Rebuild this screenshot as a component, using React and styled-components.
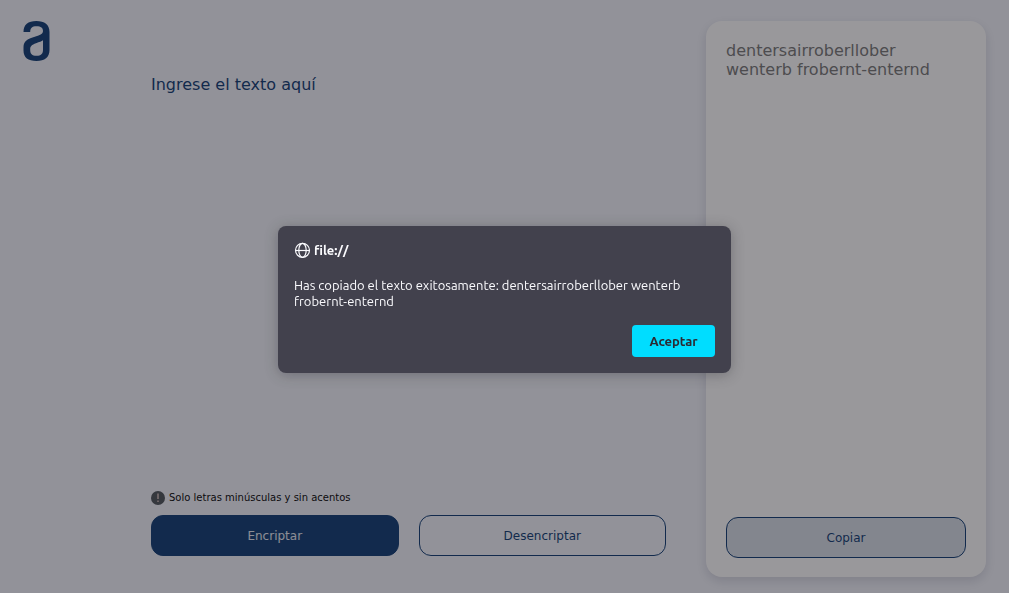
import React from "react";
import styled, { createGlobalStyle } from "styled-components";

const navy = "#0a3871";
const pageFont = '"DejaVu Sans", Verdana, sans-serif';
const dialogFont = 'Ubuntu, "Noto Sans", sans-serif';

const GlobalStyle = createGlobalStyle`
  *, *::before, *::after { box-sizing: border-box; }
  body { margin: 0; background: #f3f5fc; font-family: ${pageFont}; }
`;

const Page = styled.div`
  display: flex;
  min-height: 100vh;
  padding: 21px 23px 16px;
`;

const Header = styled.header`
  flex: 0 0 128px;
`;

const Logo = styled.svg`
  display: block;
  width: 27px;
  height: 40px;
`;

const Editor = styled.main`
  flex: 1;
  min-width: 0;
  display: flex;
  flex-direction: column;
  padding: 54px 0 21px;
`;

const Input = styled.textarea`
  flex: 1;
  width: 100%;
  padding: 0;
  border: 0;
  outline: 0;
  resize: none;
  background: transparent;
  color: ${navy};
  font: 16px/19px ${pageFont};

  &::placeholder { color: ${navy}; opacity: 1; }
`;

const Hint = styled.p`
  display: flex;
  align-items: center;
  gap: 4px;
  margin: 0 0 10px;
  color: #000;
  font-size: 10px;
  line-height: 14px;
`;

const HintIcon = styled.svg`
  width: 14px;
  height: 14px;
`;

const Actions = styled.div`
  display: grid;
  grid-template-columns: 1fr 1fr;
  gap: 20px;
`;

const tones = {
  filled: `background: ${navy}; color: #e8ecf4;`,
  outline: `background: transparent; color: ${navy};`,
  soft: `background: #d8dfe8; color: ${navy};`,
};

const Button = styled.button`
  height: 41px;
  padding: 0 16px;
  border: 1px solid ${navy};
  border-radius: 12px;
  font: 12px ${pageFont};
  ${({ $tone }) => tones[$tone]}
`;

const Result = styled.aside`
  flex: 0 0 280px;
  display: flex;
  flex-direction: column;
  justify-content: space-between;
  margin-left: 40px;
  padding: 20px 20px 19px;
  border-radius: 16px;
  background: #fff;
  box-shadow: 0 4px 12px rgba(0, 0, 40, 0.14);
`;

const ResultText = styled.p`
  margin: 0;
  color: #757575;
  font-size: 16px;
  line-height: 19px;
`;

const Overlay = styled.div`
  position: fixed;
  inset: 0;
  display: flex;
  align-items: center;
  justify-content: center;
  padding: 6px 16px 0 16px;
  background: rgba(28, 27, 34, 0.45);
`;

const Dialog = styled.section`
  width: 453px;
  max-width: 100%;
  padding: 16px;
  border-radius: 8px;
  background: #42414d;
  color: #fbfbfe;
  box-shadow: 0 2px 14px rgba(28, 27, 34, 0.3);
  font: 13px/16px ${dialogFont};
`;

const Origin = styled.h2`
  display: flex;
  align-items: center;
  gap: 3px;
  margin: 0 0 19px;
  font-size: 13px;
  font-weight: 700;
  line-height: 16px;
`;

const Globe = styled.svg`
  width: 17px;
  height: 16px;
`;

const Message = styled.p`
  margin: 0;
`;

const DialogActions = styled.div`
  display: flex;
  justify-content: flex-end;
  margin-top: 16px;
`;

const AcceptButton = styled.button`
  width: 83px;
  height: 32px;
  padding: 0;
  border: 0;
  border-radius: 4px;
  background: #00ddff;
  color: #2b2a33;
  font: 700 13px ${dialogFont};
`;

export default function App() {
  return (
    <>
      <GlobalStyle />
      <Page>
        <Header>
          <Logo viewBox="0 0 27 40" role="img" aria-label="Logo">
            <path
              fill={navy}
              fillRule="evenodd"
              d="M0.500 11C0.500 3.800 5 0 13.300 0C21.700 0 26.500 3.800 26.500 11V29C26.500 36.200 21.700 40 13.500 40C5 40 0.500 36.500 0.500 29.500V26.500C0.500 21.200 3 19 8 17L15.500 14.400C19 13.200 20 12 20 10C20 6.800 18 5.200 13.500 5.200C9 5.200 7.200 7 7.200 11ZM20 19.300C18.500 20.500 16.500 21 13 22.200C8.700 23.800 7.200 25.200 7.200 28V29C7.200 32.900 9 34.800 13.500 34.800C18 34.800 20 32.900 20 29Z"
            />
          </Logo>
        </Header>
        <Editor>
          <Input aria-label="Texto" placeholder="Ingrese el texto aquí" />
          <Hint>
            <HintIcon viewBox="0 0 14 14" aria-hidden="true">
              <circle cx="7" cy="7" r="7" fill="#495057" />
              <path d="M7 2.500v5.500M7 9.500v1.500" stroke="#e0c8c4" strokeWidth="1.300" />
            </HintIcon>
            Solo letras minúsculas y sin acentos
          </Hint>
          <Actions>
            <Button type="button" $tone="filled">Encriptar</Button>
            <Button type="button" $tone="outline">Desencriptar</Button>
          </Actions>
        </Editor>
        <Result>
          <ResultText>dentersairroberllober wenterb frobernt-enternd</ResultText>
          <Button type="button" $tone="soft">Copiar</Button>
        </Result>
      </Page>
      <Overlay>
        <Dialog role="alertdialog" aria-modal="true" aria-labelledby="origin" aria-describedby="message">
          <Origin id="origin">
            <Globe viewBox="0 0 17 16" fill="none" stroke="currentColor" strokeWidth="1.200" aria-hidden="true">
              <circle cx="8.500" cy="8.300" r="7" />
              <ellipse cx="8.500" cy="8.300" rx="3.700" ry="7" />
              <path d="M1.500 8.500h14" />
            </Globe>
            file://
          </Origin>
          <Message id="message">
            Has copiado el texto exitosamente: dentersairroberllober wenterb frobernt-enternd
          </Message>
          <DialogActions>
            <AcceptButton type="button">Aceptar</AcceptButton>
          </DialogActions>
        </Dialog>
      </Overlay>
    </>
  );
}
